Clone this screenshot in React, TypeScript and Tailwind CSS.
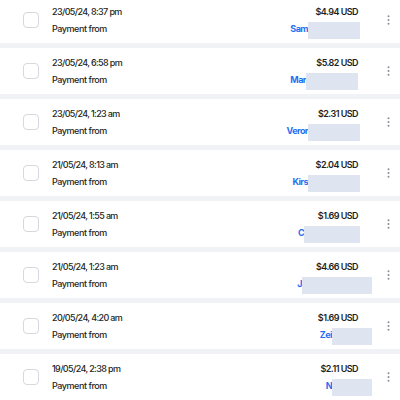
const rows = [
  { date: '23/05/24, 8:37 pm', amount: '$4.94 USD', name: 'Sam', box: 'w-[52px] -mr-[2px]' },
  { date: '23/05/24, 6:58 pm', amount: '$5.82 USD', name: 'Mar', box: 'w-[52px]' },
  { date: '23/05/24, 1:23 am', amount: '$2.31 USD', name: 'Veror', box: 'w-[52px] -mr-[2px]' },
  { date: '21/05/24, 8:13 am', amount: '$2.04 USD', name: 'Kirs', box: 'w-[52px] -mr-[2px]' },
  { date: '21/05/24, 1:55 am', amount: '$1.69 USD', name: 'C', box: 'w-[56px] -mr-[2px]' },
  { date: '21/05/24, 1:23 am', amount: '$4.66 USD', name: 'J', box: 'w-[70px] -mr-[14px]' },
  { date: '20/05/24, 4:20 am', amount: '$1.69 USD', name: 'Zei', box: 'w-[40px] -mr-[14px]' },
  { date: '19/05/24, 2:38 pm', amount: '$2.11 USD', name: 'N', box: 'w-[40px] -mr-[14px]' },
]

function Kebab() {
  return (
    <svg width="3" height="10" viewBox="0 0 3 10" className="text-[#8b8f98] shrink-0">
      <circle cx="1.5" cy="1.2" r="1" fill="currentColor" />
      <circle cx="1.5" cy="5" r="1" fill="currentColor" />
      <circle cx="1.5" cy="8.8" r="1" fill="currentColor" />
    </svg>
  )
}

export default function App() {
  return (
    <div className="w-[400px] h-[400px] overflow-hidden bg-[#f1f2f6]" style={{ fontFamily: 'Inter, "Liberation Sans", sans-serif' }}>
      <div className="flex flex-col gap-[5px] -mt-[3px]">
        {rows.map(r => (
          <div key={r.date + r.amount} className="flex items-center h-[46px] bg-white pl-[23px] pr-[10px]">
            <div className="w-[16px] h-[16px] rounded-[4px] border border-[#d5d8de] bg-white shrink-0" />
            <div className="flex flex-col ml-[13px] gap-[7px] text-[9px] leading-[10px] text-[#1d1f23] font-medium">
              <span className="tracking-[-0.07em]">{r.date}</span>
              <span className="tracking-[-0.05em]">Payment from</span>
            </div>
            <div className="flex flex-col items-end ml-auto mr-[29px] gap-[7px] text-[9px] leading-[10px] tracking-[-0.06em] font-semibold">
              <span className="text-[#1d1f23]">{r.amount}</span>
              <div className="flex items-start h-[10px]">
                <span className="text-[#1f6ff2] font-bold">{r.name}</span>
                <span className={`h-[17px] -mt-[2px] bg-[#dfe4f1] shrink-0 ${r.box}`} />
              </div>
            </div>
            <Kebab />
          </div>
        ))}
      </div>
    </div>
  )
}
